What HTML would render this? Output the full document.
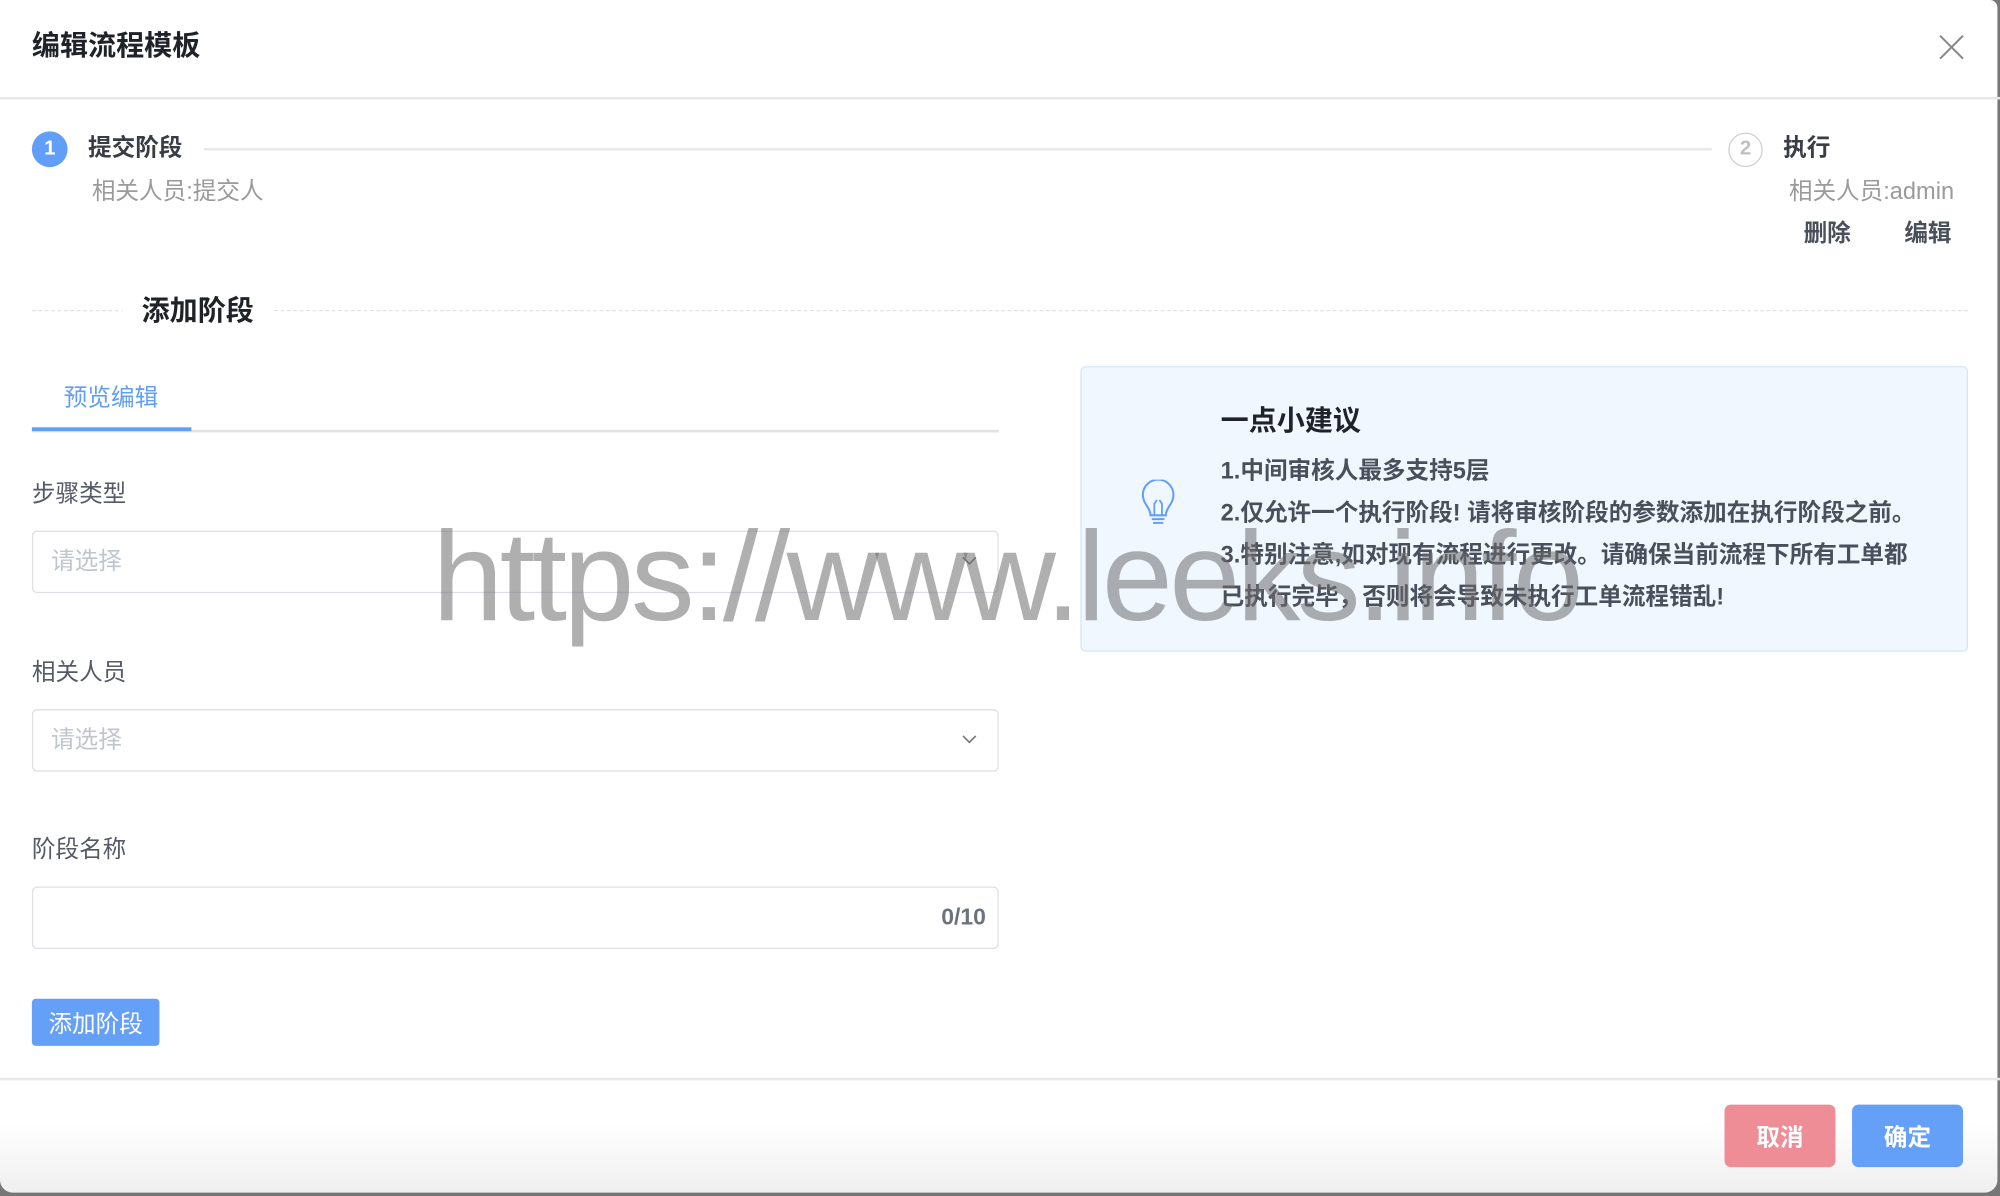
<!DOCTYPE html>
<html><head><meta charset="utf-8"><style>
*{margin:0;padding:0;box-sizing:border-box}
html,body{width:2000px;height:1196px;overflow:hidden;background:#767676}
#s{position:absolute;left:0;top:0;width:1568px;height:938px;transform:scale(1.27551);transform-origin:0 0;font-family:"Liberation Sans","Noto Sans CJK SC",sans-serif}
.modal{position:absolute;left:0;top:0;width:1566px;height:935px;background:linear-gradient(to bottom,#fff 0,#fff 880px,#efefef 935px);border-radius:0 6px 10px 10px}
.a{position:absolute;white-space:nowrap;line-height:1}
.hr{position:absolute;left:0;width:1568px;height:2px;background:#e8e8e8}
.inp{position:absolute;left:25px;width:758px;height:49px;border:1.5px solid #dcdfe6;border-radius:4px;background:#fff}
.ph{position:absolute;left:14px;top:14px;font-size:18.5px;color:#c0c4cc;line-height:1}
.lbl{font-size:18.5px;color:#555a66}
.tip{font-size:18.5px;color:#4a4f5c;font-weight:bold}
.btn{position:absolute;color:#fff;font-size:18.5px;font-weight:bold;display:flex;align-items:center;justify-content:center;border-radius:5px}
</style></head><body><div id="s">
<div class="modal">
<div class="a" style="left:25px;top:25px;font-size:22px;font-weight:bold;color:#1f2329">编辑流程模板</div>
<svg class="a" style="left:1519px;top:26px" width="22" height="22" viewBox="0 0 22 22"><path d="M2 2L20 20M20 2L2 20" stroke="#888" stroke-width="1.6"/></svg>
<div class="hr" style="top:76px"></div>

<div class="a" style="left:25px;top:103px;width:28px;height:28px;border-radius:50%;background:#619ef8;color:#fff;font-size:16px;font-weight:bold;text-align:center;line-height:28px">1</div>
<div class="a" style="left:69px;top:107px;font-size:18.5px;font-weight:bold;color:#3a3d45">提交阶段</div>
<div class="a" style="left:160px;top:116px;width:1182px;height:2px;background:#e8e8e8"></div>
<div class="a" style="left:1355px;top:104px;width:27px;height:27px;border-radius:50%;border:1.5px solid #cfcfcf;color:#c0c0c0;font-size:16px;font-weight:bold;text-align:center;line-height:24px">2</div>
<div class="a" style="left:1398px;top:107px;font-size:18.5px;font-weight:bold;color:#3a3d45">执行</div>
<div class="a" style="left:72px;top:141px;font-size:18.5px;color:#9a9a9a">相关人员:提交人</div>
<div class="a" style="right:34px;top:141px;font-size:18.5px;color:#9a9a9a">相关人员:admin</div>
<div class="a" style="left:1414px;top:174px;font-size:18.5px;font-weight:bold;color:#4a4f5c">删除</div>
<div class="a" style="left:1493px;top:174px;font-size:18.5px;font-weight:bold;color:#4a4f5c">编辑</div>

<div class="a" style="left:25px;top:243px;width:1518px;border-top:1.5px dashed #e3e3e3"></div>
<div class="a" style="left:96px;top:233px;padding:0 15px;background:#fff;font-size:22px;font-weight:bold;color:#1f2329">添加阶段</div>

<div class="a" style="left:50px;top:303px;font-size:18.5px;color:#619ef8">预览编辑</div>
<div class="a" style="left:25px;top:337px;width:758px;height:2px;background:#e2e2e6"></div>
<div class="a" style="left:25px;top:335px;width:125px;height:3px;background:#619ef8"></div>

<div class="a lbl" style="left:25px;top:378px">步骤类型</div>
<div class="inp" style="top:416px"><div class="ph">请选择</div></div>
<div class="a lbl" style="left:25px;top:518px">相关人员</div>
<div class="inp" style="top:556px"><div class="ph">请选择</div></div>
<svg class="a" style="left:754px;top:575px" width="12" height="10" viewBox="0 0 12 10"><path d="M1 2L6 7L11 2" fill="none" stroke="#777" stroke-width="1.3"/></svg>
<svg class="a" style="left:754px;top:435px" width="12" height="10" viewBox="0 0 12 10"><path d="M1 2L6 7L11 2" fill="none" stroke="#777" stroke-width="1.3"/></svg>
<div class="a lbl" style="left:25px;top:657px">阶段名称</div>
<div class="inp" style="top:695px"><div class="a" style="right:9px;top:14px;font-size:18px;font-weight:bold;color:#6b7280">0/10</div></div>

<div class="btn" style="left:25px;top:783px;width:100px;height:37px;border-radius:3px;background:#64a0f8;font-weight:normal">添加阶段</div>

<div class="a" style="left:847px;top:287px;width:696px;height:224px;background:#f0f7ff;border:1.5px solid #d5e6fb;border-radius:4px"></div>
<svg class="a" style="left:893px;top:376px" width="30" height="40" viewBox="0 0 30 40"><path d="M9 28C9 22 3 19 3 12A12 12 0 0 1 27 12C27 19 21 22 21 28Z" fill="none" stroke="#619ef8" stroke-width="1.6"/><path d="M12 28V19L14 16M18 28V19L16 16" fill="none" stroke="#619ef8" stroke-width="1.4"/><path d="M10 31H20M11 34H19" stroke="#619ef8" stroke-width="1.5"/></svg>
<div class="a" style="left:957px;top:319px;font-size:22px;font-weight:bold;color:#1f2329">一点小建议</div>
<div class="a tip" style="left:957px;top:360px">1.中间审核人最多支持5层</div>
<div class="a tip" style="left:957px;top:393px">2.仅允许一个执行阶段! 请将审核阶段的参数添加在执行阶段之前。</div>
<div class="a tip" style="left:957px;top:426px">3.特别注意,如对现有流程进行更改。请确保当前流程下所有工单都</div>
<div class="a tip" style="left:957px;top:459px">已执行完毕，否则将会导致未执行工单流程错乱!</div>

<div class="hr" style="top:845px"></div>
<div class="btn" style="left:1352px;top:866px;width:87px;height:49px;background:#ee8d96">取消</div>
<div class="btn" style="left:1452px;top:866px;width:87px;height:49px;background:#64a0f8">确定</div>

<div class="a" style="left:339px;top:402px;font-size:100px;color:rgba(110,110,110,0.55);letter-spacing:-2.8px">https://www.leeks.info</div>
</div>
</div></body></html>
